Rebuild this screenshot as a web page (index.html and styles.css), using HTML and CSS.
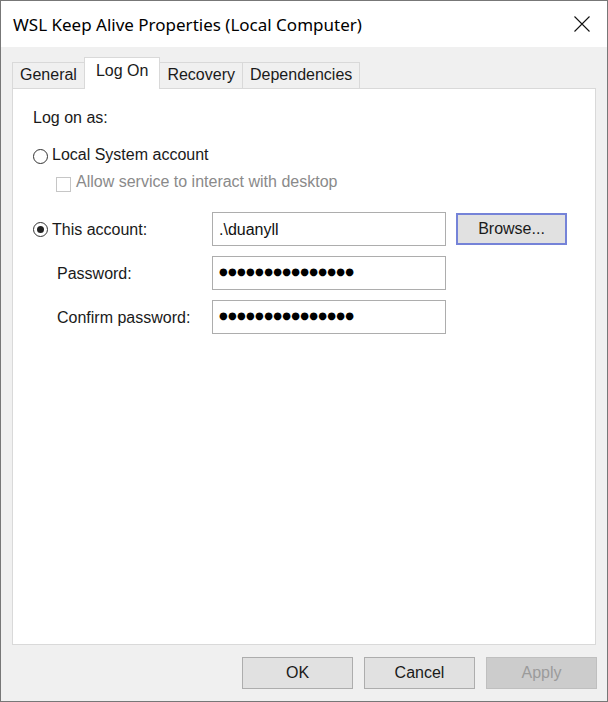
FILE: index.html
```html
<!DOCTYPE html>
<html lang="en">
<head>
    <meta charset="UTF-8">
    <meta name="viewport" content="width=device-width, initial-scale=1.0">
    <title>WSL Keep Alive Properties (Local Computer)</title>
    <link rel="stylesheet" href="styles.css">
</head>
<body>
    <div class="window">
        <!-- Title bar -->
        <div class="titlebar">
            <span class="title">WSL Keep Alive Properties (Local Computer)</span>
            <svg class="close" width="16" height="16" viewBox="0 0 16 16">
                <path d="M0.5 0.5 L15.5 15.5 M15.5 0.5 L0.5 15.5" stroke="#111" stroke-width="1.1" fill="none"/>
            </svg>
        </div>

        <!-- Tabs -->
        <div class="tabs">
            <div class="tab">General</div>
            <div class="tab active">Log On</div>
            <div class="tab">Recovery</div>
            <div class="tab">Dependencies</div>
        </div>

        <!-- Log On page -->
        <div class="panel">
            <p class="heading">Log on as:</p>

            <div class="option">
                <span class="radio"></span>
                <span>Local System account</span>
            </div>
            <div class="option sub disabled">
                <span class="checkbox"></span>
                <span>Allow service to interact with desktop</span>
            </div>

            <div class="account">
                <div class="label">
                    <span class="radio checked"></span>
                    <span>This account:</span>
                </div>
                <div class="field">.\duanyll</div>
                <button class="btn default">Browse...</button>

                <div class="label indent">Password:</div>
                <div class="field"><span class="dots">●●●●●●●●●●●●●●●</span></div>
                <div></div>

                <div class="label indent">Confirm password:</div>
                <div class="field"><span class="dots">●●●●●●●●●●●●●●●</span></div>
                <div></div>
            </div>
        </div>

        <!-- Dialog buttons -->
        <div class="buttons">
            <button class="btn">OK</button>
            <button class="btn">Cancel</button>
            <button class="btn" disabled>Apply</button>
        </div>
    </div>
</body>
</html>
```

FILE: styles.css
```css
* {
    box-sizing: border-box;
}
body {
    margin: 0;
    font-family: "Liberation Sans", Arial, sans-serif;
    font-size: 16px;
    color: #1a1a1a;
    background: #ffffff;
}
.window {
    width: 608px;
    height: 702px;
    border: 1px solid #777;
    background: #f0f0f0;
    display: flex;
    flex-direction: column;
}

/* Title bar */
.titlebar {
    height: 46px;
    background: #ffffff;
    display: flex;
    align-items: center;
    justify-content: space-between;
    padding: 0 17px 0 12px;
}
.title {
    font-family: "Noto Sans", "Open Sans", sans-serif;
    font-size: 17px;
    color: #000;
    margin-top: 1px;
}
.close {
    display: block;
    margin-top: -1px;
}

/* Tabs */
.tabs {
    display: flex;
    align-items: flex-end;
    height: 31px;
    margin-top: 10px;
    padding-left: 11px;
}
.tab {
    height: 26px;
    line-height: 24px;
    padding: 0 7px;
    border: 1px solid #d9d9d9;
    border-bottom: none;
    border-left: none;
    background: #f0f0f0;
}
.tab:first-child {
    border-left: 1px solid #d9d9d9;
}
.tab.active {
    height: 32px;
    padding: 1px 11px 0;
    margin-bottom: -1px;
    margin-left: -1px;
    border-left: 1px solid #d9d9d9;
    background: #ffffff;
    position: relative; /* sits over the panel border */
    z-index: 1;
}

/* Tab page */
.panel {
    height: 557px;
    margin: 0 11px;
    padding-left: 20px;
    background: #ffffff;
    border: 1px solid #d9d9d9;
}
.heading {
    margin: 20px 0 0;
    line-height: 17px;
}
.option {
    display: flex;
    align-items: flex-start;
    margin-top: 20px;
    line-height: 17px;
}
.option.sub {
    margin-top: 9px;
    margin-left: 23px;
}
.option.disabled {
    color: #8a8a8a;
}
.radio {
    width: 15px;
    height: 15px;
    margin: 3px 4px 0 0;
    border: 1px solid #333;
    border-radius: 50%;
    background: #fff;
    display: flex;
    align-items: center;
    justify-content: center;
    flex: none;
}
.radio.checked::after {
    content: "";
    width: 7px;
    height: 7px;
    border-radius: 50%;
    background: #222;
}
.checkbox {
    width: 15px;
    height: 15px;
    margin: 4px 5px 0 0;
    border: 1px solid #c6c6c6;
    background: #fff;
    flex: none;
}

/* Account fields */
.account {
    display: grid;
    grid-template-columns: 179px 234px auto;
    grid-auto-rows: 34px;
    row-gap: 10px;
    margin-top: 20px;
    line-height: 17px;
}
.label {
    display: flex;
    align-items: center;
}
.label .radio {
    margin-top: 0;
}
.label.indent {
    padding-left: 24px;
}
.field {
    border: 1px solid #adadad;
    background: #fff;
    padding: 0 6px;
    display: flex;
    align-items: center;
    color: #111;
}
.dots {
    font-family: "DejaVu Sans", sans-serif;
    font-size: 10px;
    letter-spacing: 0.3px;
    color: #000;
    margin-top: -3px;
}

/* Buttons */
.btn {
    width: 111px;
    height: 32px;
    font-family: "Liberation Sans", Arial, sans-serif;
    font-size: 16px;
    color: #1a1a1a;
    background: #e1e1e1;
    border: 1px solid #adadad;
    padding: 0;
}
.btn.default {
    align-self: start;
    margin: 1px 0 0 10px;
    border: 2px solid #7583d8;
}
.btn:disabled {
    background: #cccccc;
    border-color: #bfbfbf;
    color: #9b9b9b;
}
.buttons {
    display: flex;
    justify-content: flex-end;
    gap: 11px;
    padding: 12px 10px 0 0;
}
```
